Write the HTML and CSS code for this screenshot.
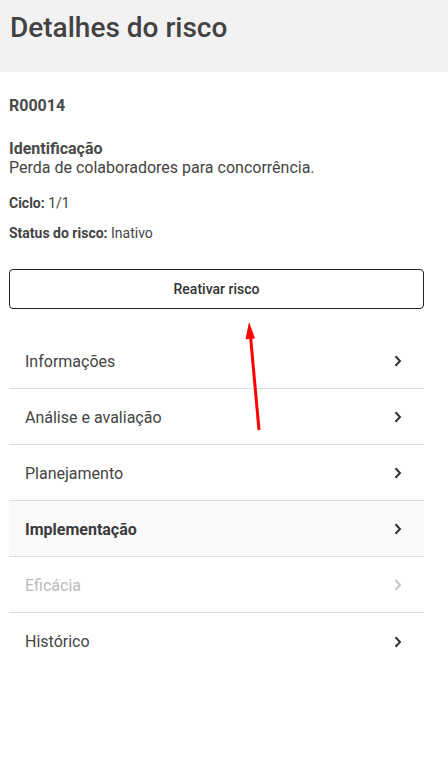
FILE: index.html
```html
<!DOCTYPE html>
<html lang="pt-BR">
<head>
<meta charset="utf-8">
<title>Detalhes do risco</title>
<link rel="stylesheet" href="styles.css">
</head>
<body>
<header class="topbar">
  <h1 class="title">Detalhes do risco</h1>
</header>
<main class="content">
  <div class="code">R00014</div>
  <section class="ident">
    <div class="ident-label">Identificação</div>
    <div class="ident-text">Perda de colaboradores para concorrência.</div>
  </section>
  <div class="field field-first"><b>Ciclo:</b> 1/1</div>
  <div class="field field-second"><b>Status do risco:</b> Inativo</div>
  <button class="btn" type="button">Reativar risco</button>
  <ul class="menu">
    <li class="item"><span>Informações</span><svg class="chev" width="8" height="12" viewBox="0 0 8 12"><path d="M1.5 1.2 L6 6 L1.5 10.8" fill="none" stroke="currentColor" stroke-width="2"/></svg></li>
    <li class="item"><span>Análise e avaliação</span><svg class="chev" width="8" height="12" viewBox="0 0 8 12"><path d="M1.5 1.2 L6 6 L1.5 10.8" fill="none" stroke="currentColor" stroke-width="2"/></svg></li>
    <li class="item"><span>Planejamento</span><svg class="chev" width="8" height="12" viewBox="0 0 8 12"><path d="M1.5 1.2 L6 6 L1.5 10.8" fill="none" stroke="currentColor" stroke-width="2"/></svg></li>
    <li class="item item-active"><span>Implementação</span><svg class="chev" width="8" height="12" viewBox="0 0 8 12"><path d="M1.5 1.2 L6 6 L1.5 10.8" fill="none" stroke="currentColor" stroke-width="2"/></svg></li>
    <li class="item item-disabled"><span>Eficácia</span><svg class="chev" width="8" height="12" viewBox="0 0 8 12"><path d="M1.5 1.2 L6 6 L1.5 10.8" fill="none" stroke="currentColor" stroke-width="2"/></svg></li>
    <li class="item"><span>Histórico</span><svg class="chev" width="8" height="12" viewBox="0 0 8 12"><path d="M1.5 1.2 L6 6 L1.5 10.8" fill="none" stroke="currentColor" stroke-width="2"/></svg></li>
  </ul>
</main>
<svg class="annot" width="448" height="767" viewBox="0 0 448 767">
  <line x1="250.3" y1="334" x2="259" y2="430" stroke="#ff0000" stroke-width="3"/>
  <polygon points="249,322 255,338.5 245.5,339.3" fill="#ff0000"/>
</svg>
</body>
</html>
```
FILE: styles.css
```css
html, body {
  margin: 0;
  padding: 0;
  background: #ffffff;
}
body {
  font-family: Roboto, "Noto Sans", "Liberation Sans", sans-serif;
  color: #444444;
  position: relative;
  width: 448px;
  min-height: 767px;
}
.topbar {
  background: #f2f2f2;
  height: 72px;
  box-sizing: border-box;
  padding: 12px 10px 0;
}
.title {
  margin: 0;
  font-size: 28px;
  line-height: 32px;
  font-weight: 500;
  color: #424242;
}
.content {
  padding: 24px 24px 0 9px;
}
.code {
  font-size: 16px;
  line-height: 19px;
  font-weight: 700;
  color: #4a4a4a;
}
.ident {
  margin-top: 24px;
  font-size: 16px;
  line-height: 19px;
}
.ident-label {
  font-weight: 700;
  color: #4a4a4a;
}
.ident-text {
  color: #444444;
}
.field {
  font-size: 14px;
  line-height: 17px;
  color: #444444;
}
.field b {
  font-weight: 700;
}
.field-first {
  margin-top: 18px;
}
.field-second {
  margin-top: 13px;
}
.btn {
  display: flex;
  align-items: center;
  justify-content: center;
  width: 100%;
  height: 40px;
  margin-top: 27px;
  box-sizing: border-box;
  border: 1px solid #23231c;
  border-radius: 4px;
  background: #ffffff;
  font-family: inherit;
  font-size: 14px;
  font-weight: 500;
  color: #333333;
  padding: 0;
}
.menu {
  list-style: none;
  margin: 24px 0 0;
  padding: 0;
}
.item {
  display: flex;
  align-items: center;
  justify-content: space-between;
  height: 56px;
  box-sizing: border-box;
  padding: 1px 22px 0 16px;
  border-bottom: 1px solid #dddddd;
  font-size: 16px;
  color: #444444;
}
.item:last-child {
  border-bottom: none;
}
.chev {
  color: #333333;
  display: block;
}
.item-active {
  background: #fafafa;
  font-weight: 700;
  color: #3a3a3a;
}
.item-disabled {
  color: #bbbbbb;
}
.item-disabled .chev {
  color: #c4c4c4;
}
.annot {
  position: absolute;
  left: 0;
  top: 0;
  pointer-events: none;
}
```
